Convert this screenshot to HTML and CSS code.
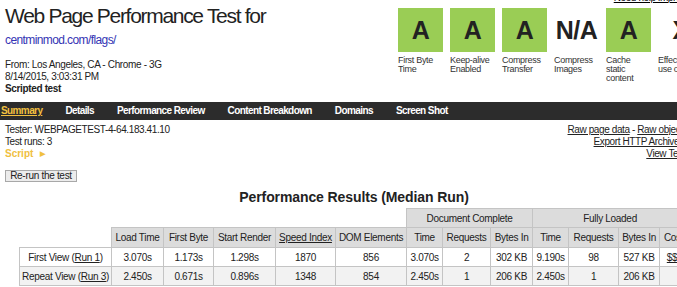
FILE: index.html
```html
<!DOCTYPE html>
<html lang="en">
<head>
<meta charset="utf-8">
<title>WebPagetest Test Result</title>
<link rel="stylesheet" href="styles.css">
</head>
<body>
<div class="page">
  <header class="top">
    <div class="title-block">
      <h1 class="title">Web Page Performance Test for</h1>
      <a class="url" href="#">centminmod.com/flags/</a>
      <div class="meta">
        <div>From: Los Angeles, CA - Chrome - 3G</div>
        <div>8/14/2015, 3:03:31 PM</div>
        <div class="strong">Scripted test</div>
      </div>
    </div>
    <div class="grades">
      <a class="help" href="#">Need help improving?</a>
      <ul class="grade-list">
        <li class="grade"><span class="grade-box pass">A</span><span class="grade-label">First Byte Time</span></li>
        <li class="grade"><span class="grade-box pass">A</span><span class="grade-label">Keep-alive Enabled</span></li>
        <li class="grade"><span class="grade-box pass">A</span><span class="grade-label">Compress Transfer</span></li>
        <li class="grade"><span class="grade-box na">N/A</span><span class="grade-label">Compress Images</span></li>
        <li class="grade"><span class="grade-box pass">A</span><span class="grade-label">Cache static content</span></li>
        <li class="grade"><span class="grade-box na">X</span><span class="grade-label">Effective use of CDN</span></li>
      </ul>
    </div>
  </header>

  <nav class="tabs">
    <a class="tab current" href="#">Summary</a>
    <a class="tab" href="#">Details</a>
    <a class="tab" href="#">Performance Review</a>
    <a class="tab" href="#">Content Breakdown</a>
    <a class="tab" href="#">Domains</a>
    <a class="tab" href="#">Screen Shot</a>
  </nav>

  <section class="info">
    <div class="info-left">
      <div>Tester: WEBPAGETEST-4-64.183.41.10</div>
      <div>Test runs: 3</div>
      <div class="script">Script <span class="arrow">&#9654;</span></div>
      <button class="rerun" type="button">Re-run the test</button>
    </div>
    <div class="info-right">
      <div><a href="#">Raw page data</a> - <a href="#">Raw object data</a></div>
      <div><a href="#">Export HTTP Archive (.har)</a></div>
      <div><a href="#">View Test Log</a></div>
    </div>
  </section>

  <h2 class="results-title">Performance Results (Median Run)</h2>

  <table class="results">
    <colgroup>
      <col class="c-label"><col class="c-load"><col class="c-fb"><col class="c-sr"><col class="c-si"><col class="c-dom">
      <col class="c-t"><col class="c-req"><col class="c-bytes">
      <col class="c-t"><col class="c-req2"><col class="c-bytes2"><col class="c-cost">
    </colgroup>
    <thead>
      <tr class="group-row">
        <th class="blank" colspan="6"></th>
        <th colspan="3">Document Complete</th>
        <th colspan="4">Fully Loaded</th>
      </tr>
      <tr class="head-row">
        <th class="blank"></th>
        <th>Load Time</th>
        <th>First Byte</th>
        <th>Start Render</th>
        <th><a href="#">Speed Index</a></th>
        <th>DOM Elements</th>
        <th>Time</th>
        <th>Requests</th>
        <th>Bytes In</th>
        <th>Time</th>
        <th>Requests</th>
        <th>Bytes In</th>
        <th>Cost</th>
      </tr>
    </thead>
    <tbody>
      <tr class="row-odd">
        <td>First View (<a href="#">Run 1</a>)</td>
        <td>3.070s</td><td>1.173s</td><td>1.298s</td><td>1870</td><td>856</td>
        <td>3.070s</td><td>2</td><td>302 KB</td>
        <td>9.190s</td><td>98</td><td>527 KB</td><td><a href="#">$$-</a></td>
      </tr>
      <tr class="row-even">
        <td>Repeat View (<a href="#">Run 3</a>)</td>
        <td>2.450s</td><td>0.671s</td><td>0.896s</td><td>1348</td><td>854</td>
        <td>2.450s</td><td>1</td><td>206 KB</td>
        <td>2.450s</td><td>1</td><td>206 KB</td><td></td>
      </tr>
    </tbody>
  </table>
</div>
</body>
</html>
```

FILE: styles.css
```css
html, body {
  margin: 0;
  padding: 0;
  background: #fff;
}

body {
  overflow: hidden;
  font-family: "Liberation Sans", Arial, sans-serif;
  color: #222;
}

.page {
  width: 698px;
  padding: 0 3px 0 5px;
}

a {
  color: #222;
}

/* ---------- header ---------- */
.top {
  display: flex;
  justify-content: space-between;
  align-items: flex-start;
}

.title {
  margin: 4px 0 0;
  font-size: 21px;
  line-height: 24px;
  font-weight: normal;
  letter-spacing: -1.3px;
  color: #222;
}

.url {
  display: block;
  margin-top: 5px;
  font-size: 12px;
  line-height: 14px;
  letter-spacing: -0.6px;
  color: #3434b4;
  text-decoration: none;
}

.meta {
  margin-top: 12px;
  font-size: 10px;
  line-height: 12px;
  letter-spacing: -0.35px;
}

.strong {
  font-weight: bold;
}

.grades {
  display: flex;
  flex-direction: column;
  align-items: flex-end;
}

.help {
  margin-top: -7px;
  font-size: 10px;
  line-height: 10px;
  letter-spacing: -0.4px;
  color: #000;
}

.grade-list {
  display: flex;
  gap: 7px;
  margin: 5px 0 0;
  padding: 0;
  list-style: none;
}

.grade {
  display: flex;
  flex-direction: column;
  width: 45px;
}

.grade-box {
  display: flex;
  align-items: center;
  justify-content: center;
  height: 44px;
  font-size: 25px;
  font-weight: bold;
  color: #222;
  letter-spacing: -0.5px;
}

.grade-box.pass {
  background: #9acd55;
}

.grade-label {
  margin-top: 4px;
  font-size: 9px;
  line-height: 9px;
  letter-spacing: -0.3px;
  color: #333;
  white-space: normal;
  width: 44px;
}

/* ---------- tabs ---------- */
.tabs {
  display: flex;
  gap: 23px;
  margin: 7px -3px 0 -5px;
  padding: 0 1px;
  height: 18px;
  background: #2c2c2c;
}

.tab {
  font-size: 10px;
  line-height: 18px;
  font-weight: bold;
  letter-spacing: -0.6px;
  color: #fff;
  text-decoration: none;
}

.tab.current {
  color: #f2c040;
  text-decoration: underline;
}

/* ---------- info ---------- */
.info {
  display: flex;
  justify-content: space-between;
  align-items: flex-start;
  margin-top: 4px;
  font-size: 10px;
  line-height: 12px;
  letter-spacing: -0.4px;
}

.script {
  color: #f0c040;
  font-weight: bold;
  letter-spacing: 0;
}

.arrow {
  font-size: 7px;
  margin-left: 4px;
  vertical-align: 1px;
}

.rerun {
  display: block;
  margin-top: 10px;
  width: 72px;
  height: 12px;
  padding: 0;
  border: 1px solid #a8a8a8;
  background: #ececec;
  font-family: "Liberation Sans", Arial, sans-serif;
  font-size: 10px;
  line-height: 10px;
  letter-spacing: -0.3px;
  color: #222;
}

.info-right {
  text-align: right;
}

/* ---------- results ---------- */
.results-title {
  margin: 7px 0 0;
  font-size: 14px;
  line-height: 16px;
  letter-spacing: -0.1px;
  text-align: center;
  color: #222;
}

.results {
  margin: 3px 0 0 14px;
  border-collapse: collapse;
  table-layout: fixed;
  width: 668px;
  font-size: 10px;
  letter-spacing: -0.3px;
  color: #222;
}

.c-label { width: 92px; }
.c-load { width: 52px; }
.c-fb { width: 50px; }
.c-sr { width: 62px; }
.c-si { width: 60px; }
.c-dom { width: 71px; }
.c-t { width: 36px; }
.c-req { width: 48px; }
.c-bytes { width: 42px; }
.c-req2 { width: 50px; }
.c-bytes2 { width: 41px; }
.c-cost { width: 28px; }

.results th,
.results td {
  border: 1px solid #c4c4c4;
  padding: 0;
  text-align: center;
  white-space: nowrap;
  overflow: hidden;
}

.results th {
  font-weight: normal;
  background: #dcdcdc;
}

.results th.blank {
  border: none;
  background: transparent;
}

.group-row th {
  height: 18px;
}

.head-row th {
  height: 19px;
}

.results td {
  height: 18px;
}

.row-odd td {
  background: #fff;
}

.row-even td {
  background: #f2f2f2;
}
```
